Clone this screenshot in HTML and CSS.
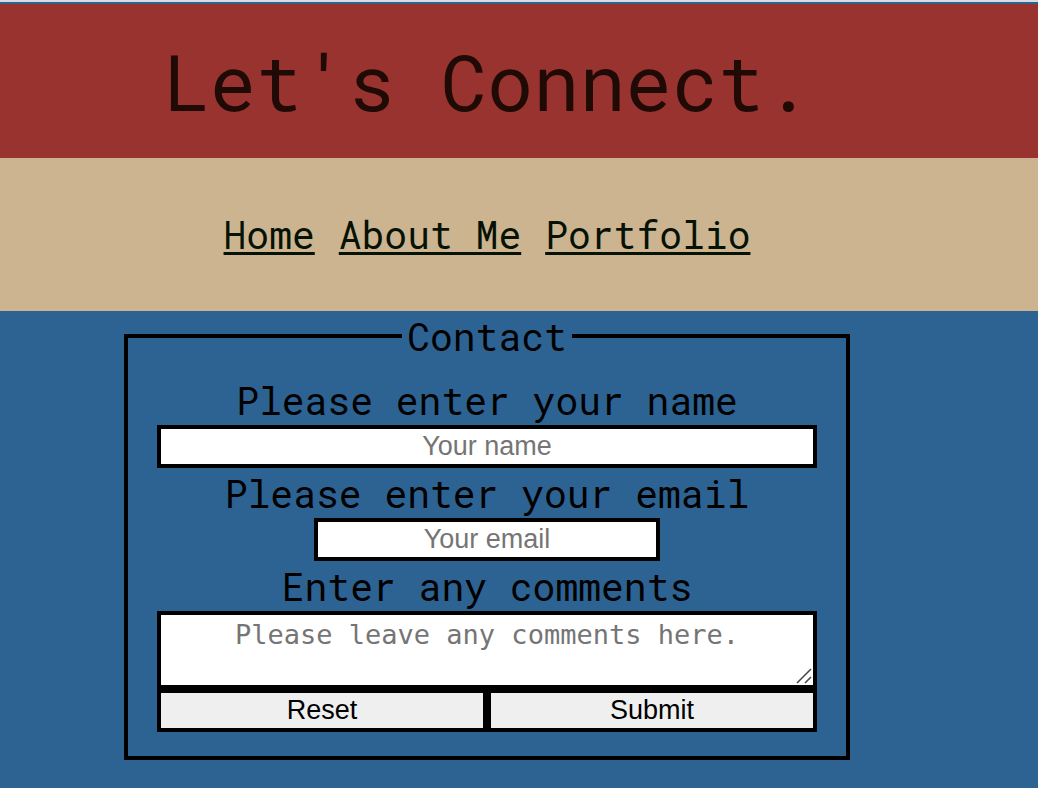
FILE: index.html
```
<!DOCTYPE html>
<html lang="en">
<head>
<meta charset="utf-8">
<title>Let's Connect.</title>
<link rel="stylesheet" href="styles.css">
</head>
<body>
<header class="banner"><h1 class="title">Let's Connect.</h1></header>
<nav class="nav">
  <a class="nav-link" href="#home">Home</a>
  <a class="nav-link" href="#about">About Me</a>
  <a class="nav-link" href="#portfolio">Portfolio</a>
</nav>
<main class="main">
  <form>
    <fieldset class="contact">
      <legend class="legend">Contact</legend>
      <label class="label" for="name">Please enter your name</label>
      <input class="field" id="name" type="text" placeholder="Your name">
      <label class="label" for="email">Please enter your email</label>
      <input class="field field-email" id="email" type="email" placeholder="Your email">
      <label class="label" for="comments">Enter any comments</label>
      <div class="comments-wrap">
        <textarea class="field comments" id="comments" placeholder="Please leave any comments here."></textarea>
        <svg class="grip" viewBox="0 0 16 16" aria-hidden="true"><path d="M1 15 15 1M9 15l6-6"/></svg>
      </div>
      <div class="actions">
        <button class="button" type="reset">Reset</button>
        <button class="button" type="submit">Submit</button>
      </div>
    </fieldset>
  </form>
</main>
</body>
</html>
```
FILE: styles.css
```
* { box-sizing: border-box; }
body {
  margin: 0;
  min-height: 100vh;
  border-top: 2px solid #d9dde2;
  padding-top: 2px;
  background: #2d6393;
  color: #000;
  font-family: "Roboto Mono", "Liberation Mono", monospace;
  font-size: 38px;
  font-weight: 400;
  line-height: 50px;
}
.banner, .nav, .main { padding-right: 64px; }
.banner {
  padding-top: 26px;
  padding-bottom: 26px;
  background: #99332f;
  color: #200a06;
  text-align: center;
}
.title {
  margin: 0;
  font-size: 77px;
  font-weight: 400;
  line-height: 102px;
}
.nav {
  display: flex;
  justify-content: center;
  gap: 24px;
  padding-top: 51px;
  padding-bottom: 52px;
  background: #cdb490;
}
.nav-link {
  color: #061204;
  text-decoration-thickness: 3px;
  text-underline-offset: 3px;
  text-decoration-skip-ink: none;
}
.contact {
  display: flex;
  flex-direction: column;
  align-items: center;
  max-width: 726px;
  min-width: 0;
  margin: 0 auto;
  padding: 14px 29px 24px;
  border: 4px solid #000;
}
.legend { margin: 0 auto; padding: 0 5px; }
.field {
  display: block;
  width: 100%;
  height: 43px;
  margin: 0;
  padding: 2px 4px;
  border: 4px solid #000;
  border-radius: 0;
  background: #fff;
  font: 27px/31px "Liberation Sans", Arial, sans-serif;
  text-align: center;
}
.field::placeholder { color: #757575; opacity: 1; }
.field-email { max-width: 346px; }
.comments-wrap { position: relative; width: 100%; }
.comments {
  height: 78px;
  padding: 4px;
  font-family: "DejaVu Sans Mono", Menlo, monospace;
  resize: vertical;
  overflow: auto;
}
.comments::-webkit-resizer { display: none; }
.grip {
  position: absolute;
  right: 5px;
  bottom: 5px;
  width: 16px;
  height: 16px;
  fill: none;
  stroke: #444;
  stroke-width: 1.5;
  pointer-events: none;
}
.actions { display: flex; width: 100%; }
.button {
  flex: 1;
  height: 43px;
  padding: 0;
  border: 4px solid #000;
  border-radius: 0;
  background: #efefef;
  color: #000;
  font: 27px/31px "Liberation Sans", Arial, sans-serif;
}
```
